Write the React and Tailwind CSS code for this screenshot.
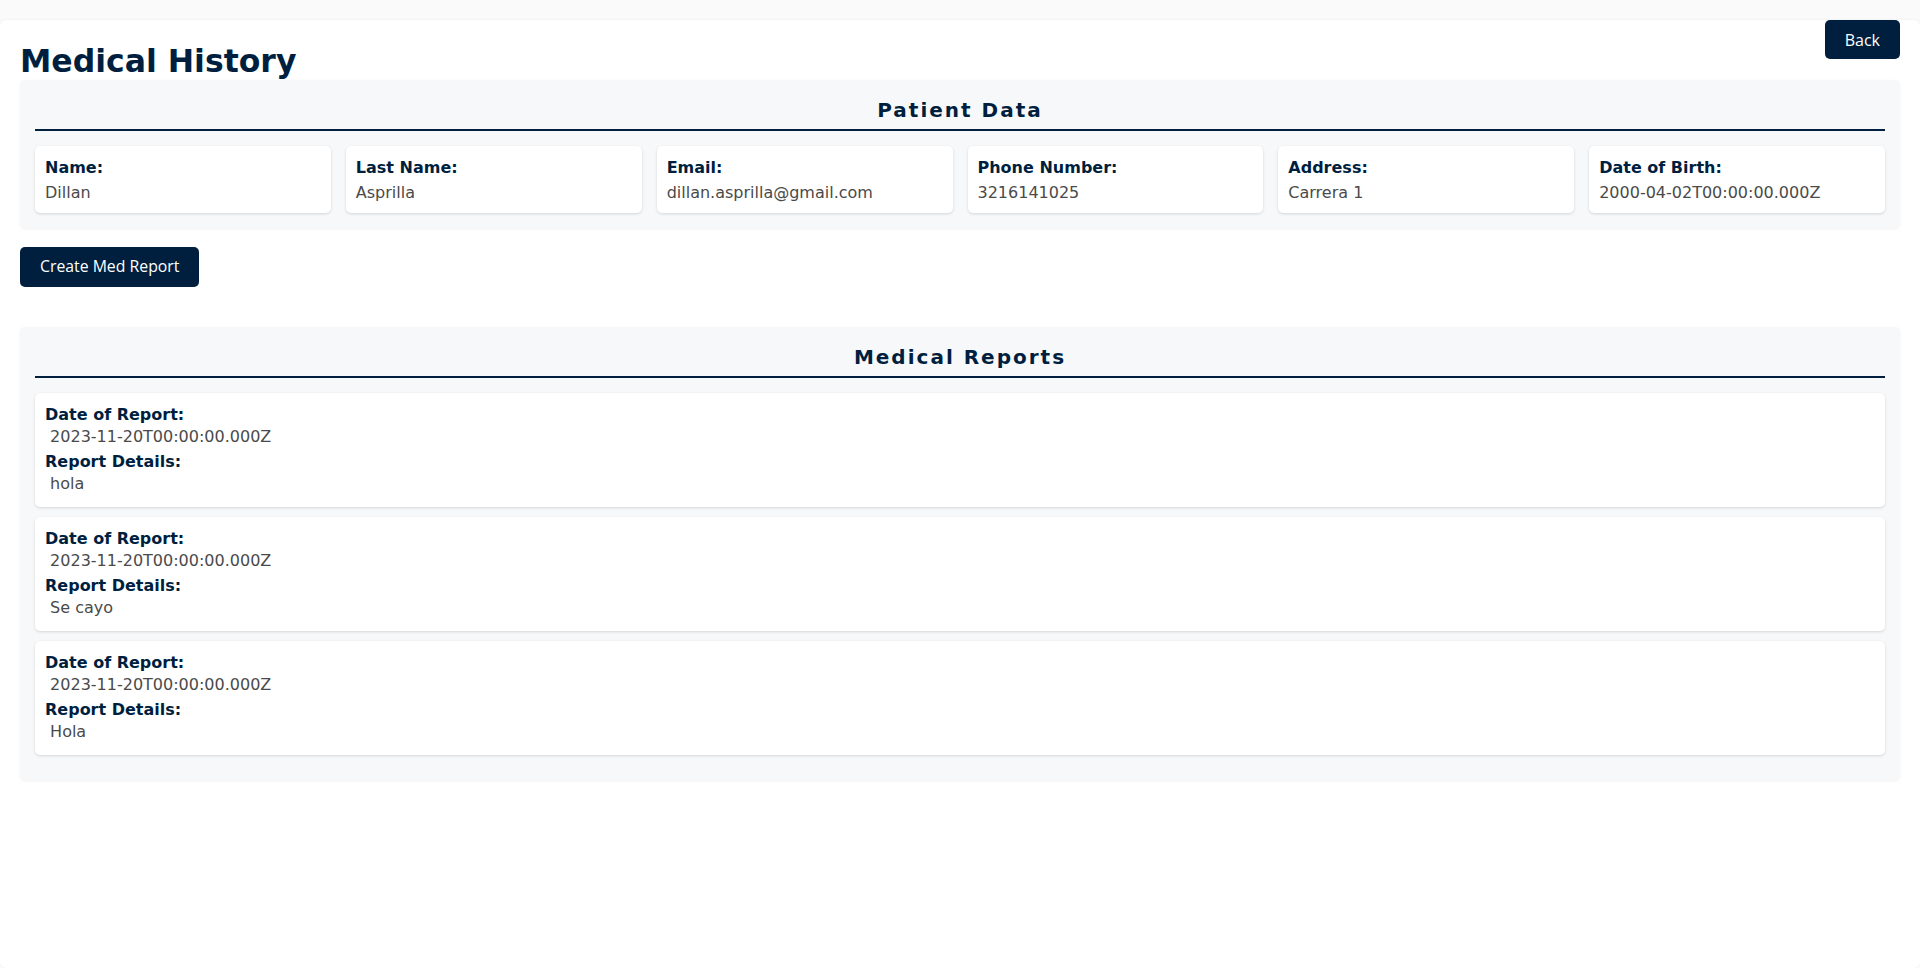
export default function App() {
  const patient = [
    ["Name:", "Dillan"],
    ["Last Name:", "Asprilla"],
    ["Email:", "dillan.asprilla@gmail.com"],
    ["Phone Number:", "3216141025"],
    ["Address:", "Carrera 1"],
    ["Date of Birth:", "2000-04-02T00:00:00.000Z"],
  ];
  const reports = [
    { date: "2023-11-20T00:00:00.000Z", details: "hola" },
    { date: "2023-11-20T00:00:00.000Z", details: "Se cayo" },
    { date: "2023-11-20T00:00:00.000Z", details: "Hola" },
  ];

  return (
    <div className="min-h-[968px] bg-[#fafafa] pt-[20px] font-['DejaVu_Sans',sans-serif]">
      <div className="min-h-[948px] bg-white rounded-[6px] shadow-[0_0_3px_rgba(0,0,0,0.06)] px-5">
        <div className="flex justify-between items-start">
          <h1 className="pt-[23px] text-[31.5px] leading-[37px] font-bold text-[#001f3f]">
            Medical History
          </h1>
          <button className="h-[39px] px-5 rounded-[5px] bg-[#001f3f] text-white font-['Open_Sans',sans-serif] text-[16px]">
            Back
          </button>
        </div>

        <section className="bg-[#f7f8fa] rounded-[5px] shadow-[0_1px_3px_rgba(0,0,0,0.06)] px-[15px] pt-[15px] pb-[15px] mb-[19px]">
          <h2 className="pt-[1px] pb-[5px] mb-[15px] border-b-2 border-[#001f3f] text-center text-[20px] leading-[28px] font-bold tracking-[2px] text-[#001f3f]">
            Patient Data
          </h2>
          <div className="grid grid-cols-6 gap-[15px]">
            {patient.map(([label, value]) => (
              <div
                key={label}
                className="bg-white rounded-[5px] shadow-[0_1px_3px_rgba(0,0,0,0.14)] px-[10px] pt-[10px] pb-[10px]"
              >
                <div className="text-[16px] leading-6 font-bold text-[#001f3f]">{label}</div>
                <div className="mt-[3px] text-[16px] leading-5 text-[#4a4a4a]">{value}</div>
              </div>
            ))}
          </div>
        </section>

        <button className="h-[40px] px-5 rounded-[5px] bg-[#001f3f] text-white font-['Open_Sans',sans-serif] text-[15.8px]">
          Create Med Report
        </button>

        <section className="mt-[40px] bg-[#f7f8fa] rounded-[5px] shadow-[0_1px_3px_rgba(0,0,0,0.06)] px-[15px] pt-[15px] pb-[15px]">
          <h2 className="pt-[1px] pb-[5px] mb-[15px] border-b-2 border-[#001f3f] text-center text-[20px] leading-[28px] font-bold tracking-[2px] text-[#001f3f]">
            Medical Reports
          </h2>
          {reports.map((r, i) => (
            <div
              key={i}
              className="mb-[10px] bg-white rounded-[5px] shadow-[0_1px_3px_rgba(0,0,0,0.14)] px-[10px] pt-[10px] pb-[10px]"
            >
              <div className="text-[16px] leading-6 font-bold text-[#001f3f]">Date of Report:</div>
              <div className="mb-[3px] text-[16px] leading-5 text-[#4a4a4a]">{"\u00a0"}{r.date}</div>
              <div className="text-[16px] leading-6 font-bold text-[#001f3f]">Report Details:</div>
              <div className="mb-[3px] text-[16px] leading-5 text-[#4a4a4a]">{"\u00a0"}{r.details}</div>
            </div>
          ))}
        </section>
      </div>
    </div>
  );
}
